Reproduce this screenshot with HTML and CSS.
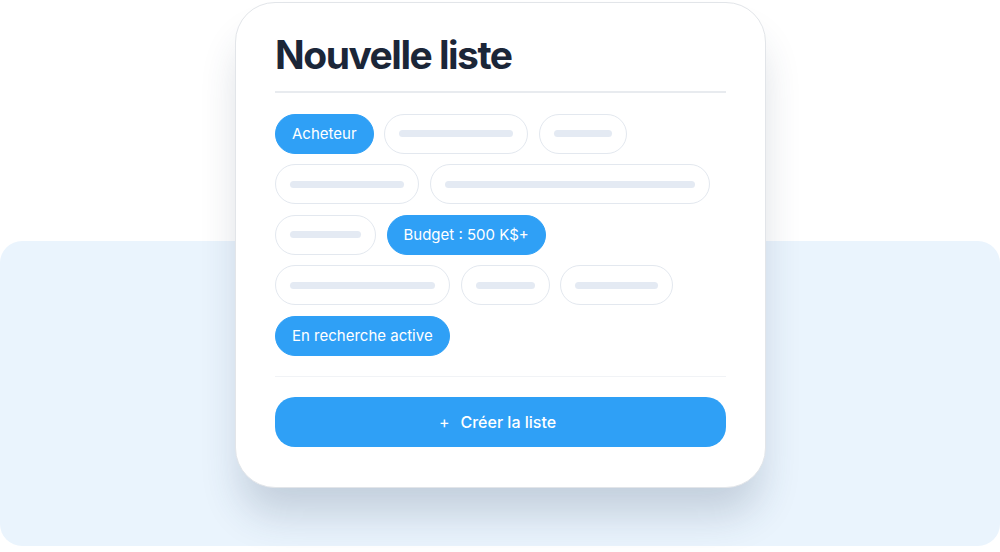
FILE: index.html
```html
<!DOCTYPE html>
<html>
<head>
	<title>Nouvelle liste</title>
	<link rel="stylesheet" href="styles.css">
</head>
<body>
	<div class="stage">
		<div class="panel"></div>
		<div class="card">
			<h1 class="card-title">Nouvelle liste</h1>
			<div class="chips">
				<span class="chip chip-on">Acheteur</span>
				<span class="chip"><span class="bar" style="width:114px"></span></span>
				<span class="chip"><span class="bar" style="width:58px"></span></span>
				<span class="chip"><span class="bar" style="width:114px"></span></span>
				<span class="chip"><span class="bar" style="width:250px"></span></span>
				<span class="chip"><span class="bar" style="width:71px"></span></span>
				<span class="chip chip-on">Budget : 500 K$+</span>
				<span class="chip"><span class="bar" style="width:145px"></span></span>
				<span class="chip"><span class="bar" style="width:59px"></span></span>
				<span class="chip"><span class="bar" style="width:83px"></span></span>
				<span class="chip chip-on">En recherche active</span>
			</div>
			<button class="create-btn"><span class="plus">+</span>Créer la liste</button>
		</div>
	</div>
</body>
</html>
```

FILE: styles.css
```css
html, body {
	margin: 0;
	padding: 0;
	background-color: #fff;
	font-family: Inter, "Noto Sans", sans-serif;
}
.stage {
	display: grid;
	width: 1000px;
	height: 552px;
	overflow: hidden;
}
.panel {
	grid-area: 1 / 1;
	margin-top: 241px;
	height: 305px;
	background-color: #eaf4fd;
	border-radius: 22px;
}
.card {
	grid-area: 1 / 1;
	align-self: start;
	justify-self: start;
	margin-left: 235px;
	margin-top: 2px;
	width: 531px;
	box-sizing: border-box;
	padding: 29px 39px 40px;
	background-color: #fff;
	border: 1.5px solid #e2e5e9;
	border-radius: 40px;
	box-shadow: 0 32px 40px -6px rgba(40, 60, 90, 0.2);
	z-index: 1;
}
.card-title {
	margin: 0;
	padding-bottom: 13px;
	border-bottom: 2px solid #e8ebef;
	font-size: 39px;
	font-weight: 700;
	letter-spacing: -1.5px;
	line-height: 46px;
	color: #1b2638;
}
.chips {
	display: flex;
	flex-wrap: wrap;
	gap: 10.5px 10.5px;
	padding: 20.5px 0 20px;
	border-bottom: 1.5px solid #f1f3f6;
}
.chip {
	display: flex;
	align-items: center;
	height: 40px;
	box-sizing: border-box;
	padding: 0 14px;
	border: 1.5px solid #e3e8ef;
	border-radius: 20px;
	background-color: #fff;
}
.chip-on {
	padding: 0 16px;
	border-color: #2fa0f6;
	background-color: #2fa0f6;
	color: #fff;
	font-size: 15px;
}
.bar {
	display: block;
	height: 7px;
	border-radius: 4px;
	background-color: #e4eaf3;
}
.create-btn {
	display: block;
	width: 100%;
	height: 50px;
	margin-top: 20px;
	border: none;
	border-radius: 20px;
	background-color: #2fa0f6;
	color: #fff;
	font-family: inherit;
	font-size: 16px;
	font-weight: 500;
}
.plus {
	margin-right: 11px;
	margin-left: -6px;
	font-weight: 400;
}
```
